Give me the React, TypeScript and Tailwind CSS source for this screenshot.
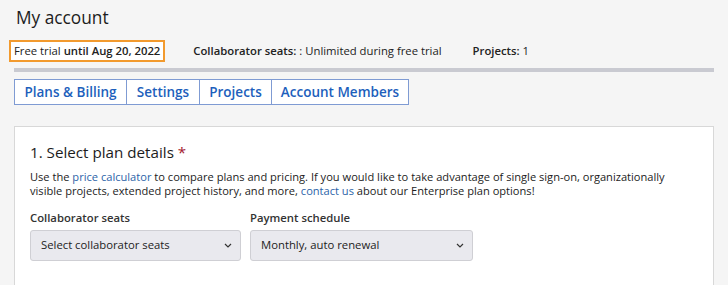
import React from "react"

const tabs = [
  { label: "Plans & Billing", w: "w-[111px]" },
  { label: "Settings", w: "w-[73px]" },
  { label: "Projects", w: "w-[72px]" },
  { label: "Account Members", w: "w-[137px]" },
]

function Chevron() {
  return (
    <svg width="8" height="5" viewBox="0 0 8 5" fill="none" className="shrink-0">
      <path d="M1 1l3 3 3-3" stroke="#333" strokeWidth="1.2" />
    </svg>
  )
}

function FakeSelect({ value, width }: { value: string; width: string }) {
  return (
    <div className={`flex h-[31px] items-center justify-between rounded-[3px] border border-[#cfcfd4] bg-[#e9e9ee] pl-[10px] pr-[8px] text-[11.3px] text-[#222] ${width}`}>
      <span>{value}</span>
      <Chevron />
    </div>
  )
}

export default function App() {
  return (
    <div className="h-[285px] w-[728px] overflow-hidden bg-[#f5f5f5] px-[14px] text-[#222]" style={{ fontFamily: '"Open Sans", "Noto Sans", sans-serif' }}>
      <h1 className="pl-[2px] pt-[5px] text-[17.3px] leading-[26px] text-[#1c1c1c]">My account</h1>

      {/* summary line */}
      <div className="mt-[9px] flex items-center whitespace-nowrap text-[11.3px] leading-[16px]">
        <div className="-ml-[5px] flex h-[22px] shrink-0 items-center border-2 border-[#f29a2e] bg-white px-[3px]">
          <span>Free trial&nbsp;</span>
          <span className="font-semibold">until Aug 20, 2022</span>
        </div>
        <div className="ml-[28px]">
          <span className="font-semibold">Collaborator seats:</span> : Unlimited during free trial
        </div>
        <div className="ml-[31px]">
          <span className="font-semibold">Projects:</span> 1
        </div>
      </div>

      <div className="mt-[6px] h-[4px] w-[700px] bg-[#c9cad1]" />

      {/* tabs */}
      <div className="mt-[7px] flex">
        <div className="flex h-[26px] border border-[#7f9bd3] bg-white">
          {tabs.map((t, i) => (
            <div
              key={t.label}
              className={`flex items-center justify-center text-[13.5px] font-semibold text-[#1d5fbc] ${t.w} ${i > 0 ? "border-l border-[#7f9bd3]" : ""}`}
            >
              {t.label}
            </div>
          ))}
        </div>
      </div>

      {/* plan card */}
      <div className="mt-[21px] h-[200px] w-[700px] border border-[#d8d8d8] bg-white px-[15px] pt-[13px]">
        <h2 className="text-[15.2px] leading-[24px] text-[#1c1c1c]">
          1. Select plan details <span className="text-[#a3192d]">*</span>
        </h2>
        <p className="mt-[6px] text-[11.1px] leading-[14px]">
          Use the <span className="text-[#2b63a8]">price calculator</span> to compare plans and pricing. If you would like to take advantage of single sign-on, organizationally visible projects, extended project history, and more, <span className="text-[#2b63a8]">contact us</span> about our Enterprise plan options!
        </p>
        <div className="mt-[12px] flex gap-[9px]">
          <div className="flex flex-col gap-[4px]">
            <div className="text-[11.3px] font-semibold leading-[16px] text-[#333]">Collaborator seats</div>
            <FakeSelect value="Select collaborator seats" width="w-[211px]" />
          </div>
          <div className="flex flex-col gap-[4px]">
            <div className="text-[11.3px] font-semibold leading-[16px] text-[#333]">Payment schedule</div>
            <FakeSelect value="Monthly, auto renewal" width="w-[223px]" />
          </div>
        </div>
      </div>
    </div>
  )
}
